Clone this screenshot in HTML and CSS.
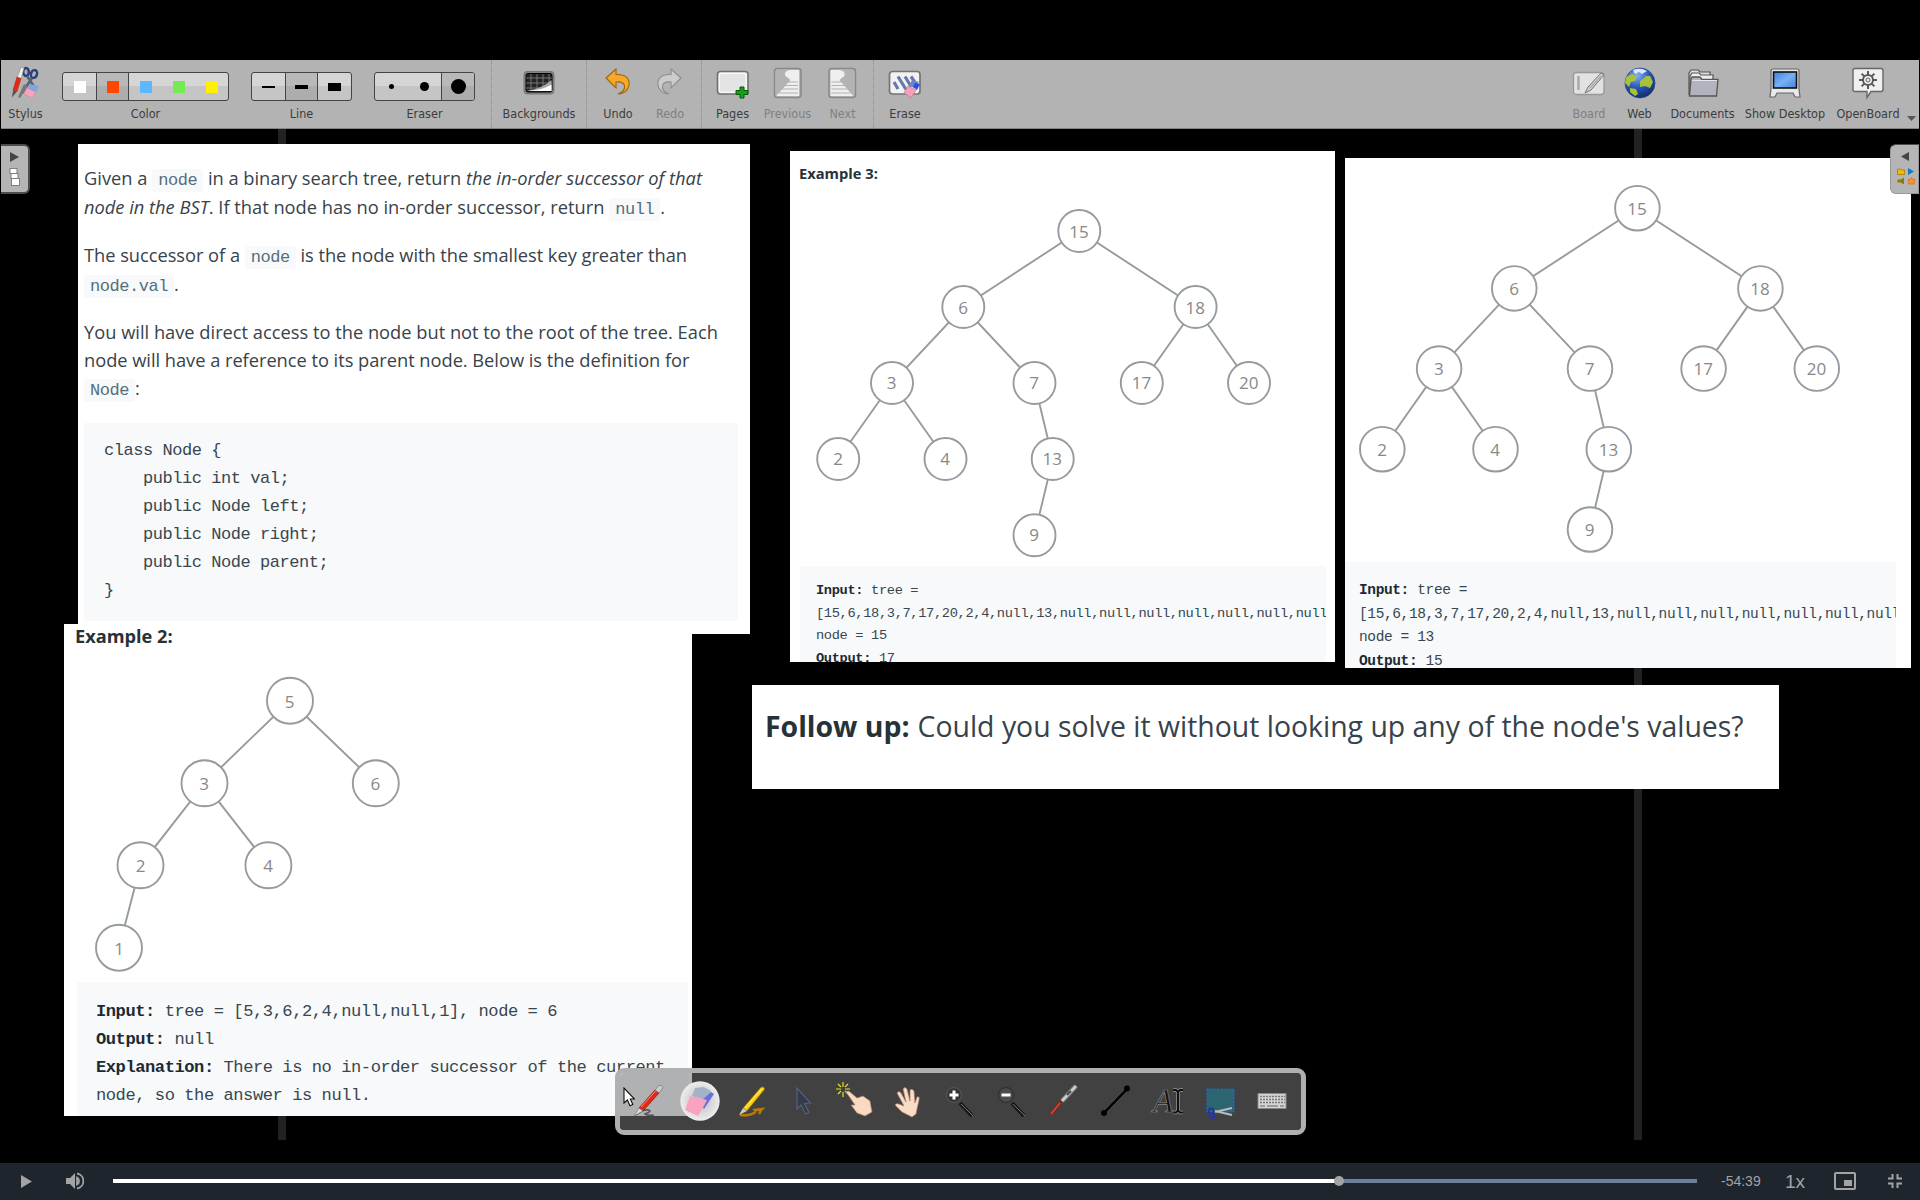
FILE: index.html
```html
<!DOCTYPE html>
<html lang="en">
<head>
<meta charset="utf-8">
<title>OpenBoard</title>
<link rel="stylesheet" href="styles.css">
</head>
<body>
<div class="screen">
<header class="toolbar">
  <div class="tool stylus">
    <svg width="32" height="34" viewBox="0 0 32 34"><g fill="none" stroke="#26407f" stroke-width="2.4"><ellipse cx="16" cy="6" rx="2.800" ry="4"/><ellipse cx="24" cy="8" rx="3" ry="4" transform="rotate(20 24 8)"/></g><path d="M17 10L25 22M22 12L12 27" stroke="#59616e" stroke-width="2.6"/><path d="M14 18l4 2-8 12-2-1z" fill="#777"/><path d="M11 1l3 1-3 11-4-1z" fill="#eee" stroke="#888" stroke-width=".6"/><path d="M7 11l4 1.5-4 13-4-1.5z" fill="#e8251a" stroke="#a31" stroke-width=".6"/><path d="M3 24l4 1.5-5 6z" fill="#555"/><path d="M20 18l9 2-3 6-9-3z" fill="#7fa6e2"/><path d="M17 22l9 4-4 6-8-4z" fill="#f5a5bd" stroke="#c88ba0" stroke-width=".6"/></svg>
    <span class="label">Stylus</span>
  </div>
  <div class="tool color">
    <div class="seg"><i class="cell"><b class="sw white"></b></i><i class="cell on"><b class="sw red"></b></i><i class="cell"><b class="sw blue"></b></i><i class="cell"><b class="sw green"></b></i><i class="cell"><b class="sw yellow"></b></i></div>
    <span class="label">Color</span>
  </div>
  <div class="tool line">
    <div class="seg"><i class="cell"><b class="bar thin"></b></i><i class="cell on"><b class="bar mid"></b></i><i class="cell"><b class="bar thick"></b></i></div>
    <span class="label">Line</span>
  </div>
  <div class="tool eraser">
    <div class="seg"><i class="cell"><b class="dot small"></b></i><i class="cell"><b class="dot medium"></b></i><i class="cell on"><b class="dot large"></b></i></div>
    <span class="label">Eraser</span>
  </div>
  <div class="tool backgrounds">
    <svg width="32" height="34" viewBox="0 0 32 34"><rect x="1" y="5.500" width="30" height="22.500" rx="3" fill="#858585" stroke="#777"/><rect x="3" y="7.500" width="26" height="18.500" rx="2" fill="#242424" stroke="#000"/><path d="M8 8v17M14 8v17M20 8v17M26 8v17M3 12h26M3 17h26M3 22h26" stroke="#888" stroke-width=".8"/><path d="M4 25Q20 22 28.500 14v11z" fill="#aaa"/><path d="M4 25Q20 24 28.500 18.500V25z" fill="#fff"/></svg>
    <span class="label">Backgrounds</span>
  </div>
  <div class="tool undo">
    <svg width="32" height="34" viewBox="0 0 32 34"><path d="M4 12L14 3v5.500C24 8 28 13 27 19c-.7 5-5 9-11 9 5-2 7-5 6.500-8-.5-3-4-4.500-8.500-4v6z" fill="#f6a828" stroke="#9c6410" stroke-width="1.100"/></svg>
    <span class="label">Undo</span>
  </div>
  <div class="tool redo off">
    <svg width="32" height="34" viewBox="0 0 32 34"><path d="M27 12L17 3v5.500C7 8 3 13 4 19c.7 5 5 9 11 9-5-2-7-5-6.500-8 .5-3 4-4.500 8.500-4v6z" fill="#ccc" stroke="#8d8d8d" stroke-width="1.100"/></svg>
    <span class="label">Redo</span>
  </div>
  <div class="tool pages">
    <svg width="34" height="34" viewBox="0 0 34 34"><rect x="1.500" y="5.500" width="30.500" height="22.500" rx="3" fill="#efefef" stroke="#707070" stroke-width="1.600"/><rect x="3.500" y="7.500" width="26.500" height="18.500" fill="#e4e4e4" stroke="#fff" stroke-width=".8"/><path d="M24 21h4v3.500h4v4h-4V32h-4v-3.500h-4v-4h4z" fill="#15a015" stroke="#06570a"/></svg>
    <span class="label">Pages</span>
  </div>
  <div class="tool previous off">
    <svg width="32" height="34" viewBox="0 0 32 34"><rect x="2.500" y="2.500" width="26.500" height="29" rx="3" fill="#bbb" stroke="#888" stroke-width="1.500"/><path d="M18 4h9v26H4L18 14l-5-4q-1-5 5-6z" fill="#efefef"/><path d="M4 4H14.500q-3 3-1 6l5 4L4 30z" fill="#b3b3b3"/><path d="M16 16h10M13 19.500h13M10 23h16M7 27h19" stroke="#aaa" stroke-width=".9"/></svg>
    <span class="label">Previous</span>
  </div>
  <div class="tool next off">
    <svg width="32" height="34" viewBox="0 0 32 34"><rect x="2" y="2.500" width="26.500" height="29" rx="3" fill="#bbb" stroke="#888" stroke-width="1.500"/><path d="M12.500 4h-9v26h23L12.500 14l5-4q1-5-5-6z" fill="#efefef"/><path d="M27 4H16.500q3 3 1 6l-5 4 14 16z" fill="#b3b3b3"/><path d="M4.500 16h10M4.500 19.500h13M4.500 23h16M4.500 27h19" stroke="#aaa" stroke-width=".9"/></svg>
    <span class="label">Next</span>
  </div>
  <div class="tool erase">
    <svg width="34" height="34" viewBox="0 0 34 34"><rect x="1.500" y="5.500" width="30.500" height="22.500" rx="3" fill="#f2f2f2" stroke="#747474" stroke-width="1.700"/><path d="M6 16l4 7M10 10.500l8 13M17 10.500l6 10M23 10.500l4 6" stroke="#6779a8" stroke-width="3.200"/><path d="M24 14l7 2-4 6-6-2z" fill="#6a85c8"/><path d="M27 17l5 1-3 6-4-3z" fill="#2650dd"/><path d="M20 20l8 4-5 8-7-5z" fill="#f79fba" stroke="#b76b85" stroke-width=".6"/></svg>
    <span class="label">Erase</span>
  </div>
  <div class="tool board off">
    <svg width="34" height="34" viewBox="0 0 34 34"><rect x="1.500" y="6.500" width="30.500" height="22" rx="3" fill="#e2e2e2" stroke="#999" stroke-width="1.300"/><path d="M6.500 10v14" stroke="#aaa" stroke-width="2.500"/><path d="M29 7L16 21l-3 6 6-3L32 9z" fill="#ccc" stroke="#777"/><path d="M29 10L18 22" stroke="#999"/></svg>
    <span class="label">Board</span>
  </div>
  <div class="tool web">
    <svg width="34" height="34" viewBox="0 0 34 34"><defs><radialGradient id="globe" cx=".4" cy=".25" r=".8"><stop offset="0" stop-color="#83b2f2"/><stop offset=".5" stop-color="#2858bd"/><stop offset="1" stop-color="#102765"/></radialGradient></defs><g transform="translate(0 1)"><circle cx="17" cy="16" r="15" fill="url(#globe)" stroke="#25427c" stroke-width=".7"/><path d="M10 3q7-3 14 1l-5 3-3-2-4 2z" fill="#dce8f8"/><path d="M3 10l6-3 5 3-2 4-4 1-2 5-4-4zM17 14l3-2 3-3 4 0 3 6-3 6-5-2-5 1zM7 21l6 1 2 5-3 2-5-4z" fill="#a7c23a"/></g></svg>
    <span class="label">Web</span>
  </div>
  <div class="tool documents">
    <svg width="34" height="34" viewBox="0 0 34 34"><g transform="translate(0 1)"><path d="M3 28V6l2-3h7l2 2h10v4" fill="#ddd" stroke="#555" stroke-width="1.200"/><path d="M4 28V9l2-3h7l2 2h12v4" fill="#eee" stroke="#555" stroke-width="1.200"/><path d="M3.500 29L5 12l1-2h8l2 2.500h16L30.500 29z" fill="#b2b3bd" stroke="#555" stroke-width="1.300"/><path d="M6 13.500h25" stroke="#e5e5ef"/></g></svg>
    <span class="label">Documents</span>
  </div>
  <div class="tool desktop">
    <svg width="34" height="34" viewBox="0 0 34 34"><defs><linearGradient id="scr" x2="1" y2="1"><stop stop-color="#387ee0"/><stop offset=".5" stop-color="#78b0f5"/><stop offset="1" stop-color="#4583dc"/></linearGradient></defs><g transform="translate(0 1)"><path d="M3 4q0-2 2-2h24q2 0 2 2v18l1 8h-5l-2-4H9l-2 4H2l1-8z" fill="#e9e9e9" stroke="#666" stroke-width="1.200"/><rect x="5.500" y="5" width="23" height="16" fill="url(#scr)" stroke="#111" stroke-width="1.600"/></g></svg>
    <span class="label">Show Desktop</span>
  </div>
  <div class="tool openboard">
    <svg width="34" height="34" viewBox="0 0 34 34"><path d="M4 2.500h26q2 0 2 2v19q0 2-2 2H20l-4 6v-6H4q-2 0-2-2v-19q0-2 2-2z" fill="#f0f0f0" stroke="#666" stroke-width="1.400"/><g transform="translate(17 14)" stroke="#5a5a5a" fill="none"><circle r="5" stroke-width="2"/><circle r="2" stroke-width="1"/><path d="M0-9v4M0 5v4M-9 0h4M5 0h4M-6.400-6.400l3 3M3.400 3.400l3 3M-6.400 6.400l3-3M3.400-3.400l3-3" stroke-width="2"/></g></svg>
    <span class="label">OpenBoard</span>
  </div>
  <svg class="more" width="9" height="5" viewBox="0 0 9 5"><path d="M0 0h9L4.500 5z" fill="#555"/></svg>
</header>

<main class="canvas">
  <div class="guide g1"></div><div class="guide g2"></div>

  <section class="clip problem">
    <p><span class="ln">Given a <code>node</code> in a binary search tree, return <em>the in-order successor of that</em></span>
    <span class="ln"><em>node in the BST</em>. If that node has no in-order successor, return <code>null</code>.</span></p>
    <p><span class="ln snug">The successor of a <code>node</code> is the node with the smallest key greater than</span>
    <span class="ln"><code>node.val</code>.</span></p>
    <p><span class="ln">You will have direct access to the node but not to the root of the tree. Each</span>
    <span class="ln snug">node will have a reference to its parent node. Below is the definition for</span>
    <span class="ln"><code>Node</code>:</span></p>
    <pre>class Node {
    public int val;
    public Node left;
    public Node right;
    public Node parent;
}</pre>
  </section>

  <section class="clip ex2">
    <h3>Example 2:</h3>
    <svg class="tree" width="628" height="334" viewBox="64 648 628 334">
      <path d="M290 700.700L204.500 783.300L140.500 865.300L119 947.700M204.500 783.300L268.400 865.300M290 700.700L375.800 783.300"/>
      <circle cx="290" cy="700.700" r="23"/><circle cx="204.500" cy="783.300" r="23"/><circle cx="375.800" cy="783.300" r="23"/><circle cx="140.500" cy="865.300" r="23"/><circle cx="268.400" cy="865.300" r="23"/><circle cx="119" cy="947.700" r="23"/>
      <text x="289.500" y="707.500">5</text><text x="204" y="790">3</text><text x="375.300" y="790">6</text><text x="140.500" y="872">2</text><text x="268" y="872">4</text><text x="119" y="954.500">1</text>
    </svg>
    <pre><b>Input:</b> tree = [5,3,6,2,4,null,null,1], node = 6
<b>Output:</b> null
<b>Explanation:</b> There is no in-order successor of the current
node, so the answer is null.</pre>
  </section>

  <section class="clip ex3">
    <h3>Example 3:</h3>
    <svg class="tree" width="545" height="380" viewBox="790 186 545 380">
      <path d="M1079.300 231L963.300 307L892 383L838.200 459M892 383L945.500 459M963.300 307L1034.500 383L1052.700 459L1034.500 535.200M1079.300 231L1195.600 307L1141.800 383M1195.600 307L1249 383"/>
      <circle cx="1079.300" cy="231" r="21"/><circle cx="963.300" cy="307" r="21"/><circle cx="1195.600" cy="307" r="21"/><circle cx="892" cy="383" r="21"/><circle cx="1034.500" cy="383" r="21"/><circle cx="1141.800" cy="383" r="21"/><circle cx="1249" cy="383" r="21"/><circle cx="838.200" cy="459" r="21"/><circle cx="945.500" cy="459" r="21"/><circle cx="1052.700" cy="459" r="21"/><circle cx="1034.500" cy="535.200" r="21"/>
      <text x="1079" y="237.500">15</text><text x="963" y="313.500">6</text><text x="1195.300" y="313.500">18</text><text x="891.500" y="389">3</text><text x="1034" y="389">7</text><text x="1141.500" y="389">17</text><text x="1248.700" y="389">20</text><text x="838" y="465">2</text><text x="945" y="465">4</text><text x="1052.300" y="465">13</text><text x="1034" y="541">9</text>
    </svg>
    <pre><b>Input:</b> tree =
[15,6,18,3,7,17,20,2,4,null,13,null,null,null,null,null,null,null
node = 15
<b>Output:</b> 17</pre>
  </section>

  <section class="clip ex4">
    <svg class="tree" width="566" height="404" viewBox="1345 158 566 404">
      <path d="M1637.400 208.200L1514.300 288.400L1439.100 368.600L1382.300 449.200M1439.100 368.600L1495.500 449.200M1514.300 288.400L1590 368.600L1608.800 449.200L1590 529.500M1637.400 208.200L1760.400 288.400L1703.600 368.600M1760.400 288.400L1816.800 368.600"/>
      <circle cx="1637.400" cy="208.200" r="22.300"/><circle cx="1514.300" cy="288.400" r="22.300"/><circle cx="1760.400" cy="288.400" r="22.300"/><circle cx="1439.100" cy="368.600" r="22.300"/><circle cx="1590" cy="368.600" r="22.300"/><circle cx="1703.600" cy="368.600" r="22.300"/><circle cx="1816.800" cy="368.600" r="22.300"/><circle cx="1382.300" cy="449.200" r="22.300"/><circle cx="1495.500" cy="449.200" r="22.300"/><circle cx="1608.800" cy="449.200" r="22.300"/><circle cx="1590" cy="529.500" r="22.300"/>
      <text x="1637" y="215">15</text><text x="1514" y="295">6</text><text x="1760" y="295">18</text><text x="1438.800" y="375">3</text><text x="1589.700" y="375">7</text><text x="1703.300" y="375">17</text><text x="1816.500" y="375">20</text><text x="1382" y="455.500">2</text><text x="1495" y="455.500">4</text><text x="1608.500" y="455.500">13</text><text x="1589.700" y="536">9</text>
    </svg>
    <pre><b>Input:</b> tree =
[15,6,18,3,7,17,20,2,4,null,13,null,null,null,null,null,null,null
node = 13
<b>Output:</b> 15</pre>
  </section>

  <section class="clip followup"><b>Follow up:</b><span>Could you solve it without looking up any of the node's values?</span></section>

  <aside class="tab left"><svg width="29" height="50" viewBox="0 0 29 50"><path d="M9 8l9 5-9 5z" fill="#444"/><g fill="#fff" stroke="#777" stroke-width=".9"><rect x="9" y="24.500" width="7" height="5"/><rect x="10" y="29.500" width="7" height="5"/><rect x="10.500" y="34.500" width="8" height="7"/></g></svg></aside>
  <aside class="tab right"><svg width="29" height="50" viewBox="0 0 29 50"><path d="M19 8l-8 4.500 8 4.500z" fill="#444"/><path d="M7.500 25h3l1 1h3v4.500h-7z" fill="#f2b90c" stroke="#a87c00" stroke-width=".8"/><path d="M18 24l6 3.500-6 3.500z" fill="#0e7dbf"/><path d="M14 33.500v7l-3-2H7.500v-3H11z" fill="#8b7c00"/><path d="M21.500 33.500l1.500 2 2 0-1 2 .5 2.500h-6l.5-2.500-1-2h2z" fill="#ff9420" stroke="#d85c00" stroke-width=".6"/></svg></aside>

  <nav class="palette">
    <svg viewBox="0 0 40 40"><path d="M8 34q7-6 12-5t-3 4q2 2 9 1" fill="none" stroke="#555" stroke-width="1.600"/><path d="M11 27L27 9l4 3-16 18z" fill="#df2a1c" stroke="#8e1a10" stroke-width=".7"/><path d="M13 26L28 9.500" stroke="#ff8a7c" stroke-width="1"/><path d="M27 9l4-4.500q3-1 4 2L31 12z" fill="#ccc" stroke="#666" stroke-width=".6"/><path d="M11 27l4 3-9 5z" fill="#ddd" stroke="#666" stroke-width=".6"/></svg>
    <svg viewBox="0 0 40 40"><defs><radialGradient id="puck"><stop offset=".3" stop-color="#c9c9cd"/><stop offset="1" stop-color="#ededed"/></radialGradient></defs><circle cx="20" cy="20" r="19.700" fill="url(#puck)"/><path d="M15 7l9-1 7 4-4 9-15-4z" fill="#a3b2c6"/><path d="M31 11l3 2-10 15-4-7z" fill="#6870dc"/><path d="M10 15l17 4-2 4-7 12-13-6z" fill="#f9a3c0"/></svg>
    <svg viewBox="0 0 40 40"><path d="M8 34q7 1 12-1t3-4l7-1q-3 3-2 5" fill="none" stroke="#b77a05" stroke-width="2.600"/><path d="M11 27L29 6q3-1 4 2L15 30z" fill="#f8cf12" stroke="#785900" stroke-width=".8"/><path d="M13 27L30 7.500" stroke="#fff27c" stroke-width="1"/><path d="M11 27l4 3-8 4z" fill="#ccc"/></svg>
    <svg viewBox="0 0 40 40"><path d="M13 7v21l4-4 4.500 9 3.500-1.500-4.500-9 6-.5z" fill="#343b4a" stroke="#56617a" stroke-width="1.200"/></svg>
    <svg viewBox="0 0 40 40"><g stroke="#e8df2c" stroke-width="1.200"><path d="M7 1v5M7 11v5M0 8h5M9 8h5M2 3l3 3M9 10l3 3M12 3l-3 3M5 10l-3 3"/></g><path d="M10 11q2-2 4 0l7 6 6-2 7 5 2 11-7 4-8-3-6-8 4 0z" fill="#fad9c2" stroke="#a57c68" stroke-width=".7"/></svg>
    <svg viewBox="0 0 40 40"><path d="M14 31L7 24q1-2 4-1l5 2-7-13q2-3 4 0l5 9-3-13q2-3 4 0l3 12 0-11q2-2 4 1l1 12 2-6q3-1 2 3l-2 9-1 5-4 3z" fill="#fadbc6" stroke="#a57c68" stroke-width=".7"/></svg>
    <svg viewBox="0 0 40 40"><path d="M20 22l12 13" stroke="#171717" stroke-width="4"/><path d="M21 23l12 12" stroke="#777" stroke-width="1"/><circle cx="14" cy="14" r="7.500" fill="#333" stroke="#505050" stroke-width="1.500"/><path d="M9.500 14h9M14 9.500v9" stroke="#fff" stroke-width="3"/></svg>
    <svg viewBox="0 0 40 40"><path d="M20 22l12 13" stroke="#171717" stroke-width="4"/><path d="M21 23l12 12" stroke="#777" stroke-width="1"/><circle cx="14" cy="14" r="7.500" fill="#4c4c4c" stroke="#333" stroke-width="1.500"/><path d="M9.500 14h9" stroke="#fff" stroke-width="3"/></svg>
    <svg viewBox="0 0 40 40"><path d="M6 34L20 17" stroke="#7a2a22" stroke-width="3.400"/><path d="M7 33L16 22" stroke="#e8402f" stroke-width="1.500"/><path d="M18 20L32 5" stroke="#6c6c6c" stroke-width="5"/><path d="M18 20L32 5" stroke="#ccc" stroke-width="2.800"/><path d="M23 14l4-4" stroke="#444" stroke-width="2"/></svg>
    <svg viewBox="0 0 40 40"><path d="M8 32L31 8" stroke="#666" stroke-width="3.400"/><path d="M8 32L31 8" stroke="#000" stroke-width="2.600"/><circle cx="8" cy="32" r="3"/><circle cx="31" cy="7.500" r="3"/></svg>
    <svg viewBox="0 0 40 40"><text x="5" y="31" class="cap">A</text><path d="M25 9h3l2 2 2-2h3M30 11v19M25 31.500h3l2-2 2 2h3" fill="none" stroke="#999" stroke-width="3.400"/><path d="M25 9h3l2 2 2-2h3M30 11v19M25 31.500h3l2-2 2 2h3" fill="none" stroke="#111" stroke-width="2"/></svg>
    <svg viewBox="0 0 40 40"><rect x="7" y="8" width="27" height="23" fill="#2c6470" stroke="#1a6be0" stroke-width="1.200" stroke-dasharray="2 1.500"/><path d="M15 31l17-4M15 30l17 4" stroke="#bbb" stroke-width="1.800"/><circle cx="11" cy="30" r="2.500" fill="none" stroke="#2635a5" stroke-width="1.800"/><circle cx="12" cy="35" r="2.500" fill="none" stroke="#2635a5" stroke-width="1.800"/></svg>
    <svg viewBox="0 0 40 40"><rect x="6" y="12.500" width="28" height="15" fill="#d4d4d4" stroke="#888"/><path d="M8 15.500h25M8 18.500h25M8 21.500h25" stroke="#777" stroke-width="1.300" stroke-dasharray="2 1"/><path d="M8 25h5M15 25h11M28 25h4" stroke="#888" stroke-width="1.300"/></svg>
  </nav>
  <svg class="pointer" width="12" height="20" viewBox="0 0 12 20"><path d="M1 1v15l3.400-3L7 18.700l2.800-1.200L7.300 12H11.500z" fill="#fff" stroke="#111" stroke-width="1.100"/></svg>
</main>

<footer class="player">
  <svg class="play" width="11" height="13" viewBox="0 0 11 13"><path d="M0 0l11 6.500L0 13z" fill="#a3a3a3"/></svg>
  <svg class="volume" width="18" height="18" viewBox="0 0 18 18"><path d="M0 6h4l5-5v16l-5-5H0z" fill="#a3a3a3"/><path d="M11 5.500a4 4 0 0 1 0 7zM11 1.500a7.600 7.600 0 0 1 0 15" fill="none" stroke="#a3a3a3" stroke-width="1.800"/></svg>
  <div class="track"><div class="played"></div><div class="thumb"></div></div>
  <span class="time">-54:39</span>
  <span class="rate">1x</span>
  <svg class="pip" width="22" height="18" viewBox="0 0 22 18"><rect x="1" y="1" width="20" height="16" rx="1" fill="none" stroke="#a3a3a3" stroke-width="2"/><rect x="10" y="8" width="8" height="6" fill="#a3a3a3"/></svg>
  <svg class="shrink" width="14" height="14" viewBox="0 0 14 14"><path d="M0 4.500h4.500V0M9.500 0v4.500H14M0 9.500h4.500V14M9.500 14V9.500H14" fill="none" stroke="#a3a3a3" stroke-width="2"/></svg>
</footer>
</div>
</body>
</html>
```
FILE: styles.css
```css
* { box-sizing: border-box; }
body { margin: 0; background: #000; font-family: "Open Sans", "Noto Sans", sans-serif; }
.screen { width: 1920px; height: 1200px; display: flex; flex-direction: column; background: #000; overflow: hidden; padding-top: 60px; }

.toolbar { height: 69px; flex: none; margin: 0 1px; background: #b3b3b3; border-bottom: 1px solid #858585; display: flex; position: relative; }
.tool { display: flex; flex-direction: column; align-items: center; padding-top: 6px; flex: none; }
.tool > svg { height: 34px; flex: none; }
.label { font: 12.5px/16px "DejaVu Sans Condensed", "DejaVu Sans", sans-serif; font-stretch: condensed; color: #3c3c3c; white-space: nowrap; margin-top: 6px; }
.off .label { color: #808080; }
.stylus { width: 49px; }
.color { width: 167px; margin-left: 12px; }
.line { width: 101px; margin-left: 22px; }
.eraser { width: 101px; margin-left: 22px; }
.backgrounds { width: 96px; margin-left: 16px; border-left: 1px dotted #8c8c8c; border-right: 1px dotted #8c8c8c; }
.undo { width: 54px; margin-left: 4px; }
.redo { width: 50px; }
.pages { width: 62px; margin-left: 6px; border-left: 1px dotted #8c8c8c; }
.previous { width: 49px; }
.next { width: 61px; }
.erase { width: 63px; border-left: 1px dotted #8c8c8c; }
.board { width: 52px; margin-left: auto; }
.web { width: 49px; }
.documents { width: 77px; }
.desktop { width: 88px; }
.openboard { width: 78px; margin-right: 12px; }
.more { position: absolute; right: 3px; bottom: 7px; }
.seg { display: flex; width: 100%; height: 29px; margin: 6px 0 -1px; border: 1px solid #444; border-radius: 3px; overflow: hidden; background: linear-gradient(#d5d5d5 50%, #c5c5c5 50%); }
.cell { flex: 1 1 30px; display: flex; align-items: center; justify-content: center; }
.cell.on { background: linear-gradient(#b9b9b9 50%, #adadad 50%); border-left: 1px solid #444; border-right: 1px solid #444; }
.cell.on:last-child { border-right: 0; }
.sw { width: 12px; height: 12px; }
.white { background: #fff; }
.red { background: #ff4500; }
.blue { background: #5db8ff; }
.green { background: #76ea55; }
.yellow { background: #fff000; }
.bar { width: 13px; background: #000; }
.thin { height: 2px; }
.mid { height: 4px; }
.thick { height: 8px; }
.dot { border-radius: 50%; background: #000; }
.small { width: 5px; height: 5px; }
.medium { width: 9px; height: 9px; }
.large { width: 15px; height: 15px; }

.canvas { flex: 1; position: relative; background: #000; }
.guide { position: absolute; top: 0; width: 8px; height: 1011px; background: #222; }
.g1 { left: 278px; }
.g2 { left: 1634px; }
.clip { position: absolute; background: #fff; color: #263238; overflow: hidden; }
.clip pre { margin: 0; font-family: "Liberation Mono", monospace; background: #f7f9fa; color: #37474f; overflow: hidden; }
.clip pre b { color: #1c2a33; }
.clip h3 { margin: 0; font-weight: 700; color: #263238; white-space: nowrap; }

.problem { left: 78px; top: 15px; width: 672px; height: 490px; padding: 20px 12px 0 6px; }
.problem p { margin: 0 0 20px; font-size: 18.270px; line-height: 28px; }
.problem p:last-of-type { margin-bottom: 21px; }
.problem p .ln:nth-child(2) { padding-top: 1px; }
.problem p:last-of-type .ln:nth-child(2) { padding-top: 0; }
.ln { display: block; white-space: nowrap; color: #37424a; }
.snug { letter-spacing: -.03px; }
.ln code { font: 17px/20px "Liberation Mono", monospace; letter-spacing: -.45px; background: #f7f9fa; color: #546e7a; padding: 2px 6px; border-radius: 3px; }
.problem pre { height: 198px; padding: 14px 0 0 20px; font-size: 17px; letter-spacing: -.45px; line-height: 28px; }

.ex2 { left: 64px; top: 495px; width: 628px; height: 492px; }
.ex2 h3 { height: 24px; padding-left: 11px; font-size: 18.200px; line-height: 24px; }
.ex2 pre { margin: 0 4px 0 13px; padding: 16px 0 0 19px; height: 134px; font-size: 17.100px; letter-spacing: -.45px; line-height: 28px; }
.tree { display: block; }
.tree path, .tree circle { stroke: #959b9f; stroke-width: 1.900; fill: none; }
.tree circle { fill: #fff; }
.tree text { font-size: 17px; fill: #888; text-anchor: middle; }

.ex3 { left: 790px; top: 22px; width: 545px; height: 511px; }
.ex3 h3 { height: 35px; padding: 11px 0 0 9px; font-size: 14.700px; line-height: 23px; }
.ex3 pre { margin: 0 9px 0 10px; padding: 14px 0 0 16px; height: 96px; font-size: 13.700px; letter-spacing: -.35px; line-height: 22.600px; }

.ex4 { left: 1345px; top: 29px; width: 566px; height: 510px; }
.ex4 pre { margin-right: 15px; padding: 17px 0 0 14px; height: 106px; font-size: 14.500px; letter-spacing: -.38px; line-height: 23.600px; }

.followup { left: 752px; top: 556px; width: 1027px; height: 104px; padding: 23px 0 0 13px; font-size: 28.420px; line-height: 36px; color: #37424a; white-space: nowrap; display: flex; align-items: flex-start; gap: 8px; }
.followup b { color: #263238; }

.tab { position: absolute; top: 15px; width: 29px; height: 50px; background: #b5b5b5; border: 1px solid #4c4c4c; display: flex; }
.tab svg { flex: none; margin: -1px; }
.left { left: 1px; border-width: 2px 2px 2px 0; border-radius: 0 6px 6px 0; }
.left svg { margin: -2px 0; }
.right { left: 1890px; border-radius: 6px 0 0 6px; border-color: #4c4c4c #999 #999; }

.palette { position: absolute; z-index: 1; left: 615px; top: 939px; width: 691px; height: 67px; border: 5px solid #b0b0b0; border-radius: 9px; background: rgba(118, 118, 118, .55) padding-box; display: flex; align-items: center; padding: 0 0 2px 8px; gap: 12px; }
.palette svg { width: 40px; height: 40px; flex: none; }
.cap { font: italic 33px "Liberation Serif", serif; fill: #111; stroke: #888; stroke-width: .7px; }
.pointer { position: absolute; left: 623px; top: 958px; z-index: 2; }

.player { height: 37px; flex: none; background: #1e252d; display: flex; align-items: center; padding: 0 0 1px 21px; color: #a3a3a3; font-family: "Liberation Sans", Arial, sans-serif; }
.volume { margin-left: 34px; }
.track { position: relative; margin-left: 29px; width: 1584px; height: 4px; background: #6b8098; }
.played { width: 1226px; height: 4px; background: #fff; }
.thumb { position: absolute; left: 1221px; top: -3px; width: 10px; height: 10px; border-radius: 50%; background: #a3a3a3; }
.time { margin-left: 24px; width: 64px; font-size: 14px; line-height: 16px; }
.rate { width: 49px; font-size: 19px; line-height: 20px; padding-top: 2px; }
.shrink { margin-left: 32px; }
```
